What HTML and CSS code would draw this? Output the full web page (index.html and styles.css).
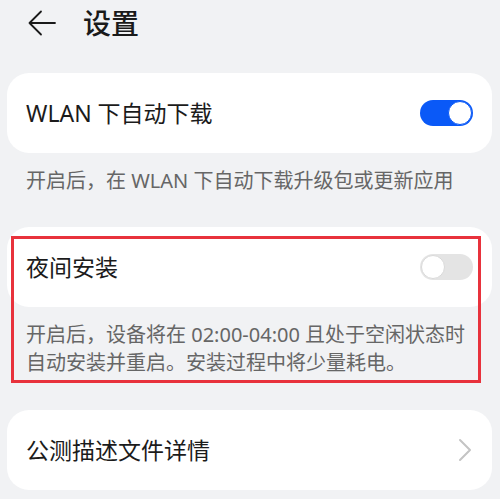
FILE: index.html
```html
<!DOCTYPE html>
<html lang="zh-CN">
<head>
<meta charset="utf-8">
<title>设置</title>
<link rel="stylesheet" href="styles.css">
</head>
<body>
<div class="page">
  <header class="header">
    <svg class="back" width="28" height="26" viewBox="0 0 28 26" aria-hidden="true">
      <path d="M13 1.5 L1.5 13 L13 24.5 M1.5 13 H27" fill="none" stroke="#1a1a1a" stroke-width="1.8" stroke-linecap="round" stroke-linejoin="round"/>
    </svg>
    <h1 class="title">设置</h1>
  </header>

  <section class="group group-first">
    <div class="card">
      <span class="card-label">WLAN 下自动下载</span>
      <span class="switch switch-on"><span class="knob"></span></span>
    </div>
    <p class="note">开启后，在 WLAN 下自动下载升级包或更新应用</p>
  </section>

  <section class="group group-marked">
    <div class="card">
      <span class="card-label">夜间安装</span>
      <span class="switch switch-off"><span class="knob"></span></span>
    </div>
    <p class="note">开启后，设备将在 02:00-04:00 且处于空闲状态时<br>自动安装并重启。安装过程中将少量耗电。</p>
    <div class="highlight"></div>
  </section>

  <section class="group group-last">
    <div class="card">
      <span class="card-label">公测描述文件详情</span>
      <svg class="chevron" width="14" height="24" viewBox="0 0 14 24" aria-hidden="true">
        <path d="M2 2 L12 12 L2 22" fill="none" stroke="#c4c4c4" stroke-width="2" stroke-linecap="round" stroke-linejoin="round"/>
      </svg>
    </div>
  </section>
</div>
</body>
</html>
```

FILE: styles.css
```css
html, body {
  margin: 0;
  padding: 0;
  background: #f1f2f4;
}

body {
  font-family: "Noto Sans", "Noto Sans CJK SC", sans-serif;
  color: #1b1b1b;
  width: 500px;
  height: 499px;
  overflow: hidden;
}

.page {
  display: flex;
  flex-direction: column;
  padding: 0 8px 0 7px;
}

.header {
  display: flex;
  align-items: center;
  height: 45px;
  padding-left: 21px;
}

.back {
  display: block;
  flex: none;
}

.title {
  margin: 0 0 0 27px;
  font-size: 28px;
  font-weight: 500;
  line-height: 36px;
  color: #1a1a1a;
}

.group {
  position: relative;
  display: flex;
  flex-direction: column;
}

.group-first {
  margin-top: 28px;
}

.group-marked {
  margin-top: 32px;
}

.group-last {
  margin-top: 33px;
}

.card {
  display: flex;
  align-items: center;
  justify-content: space-between;
  height: 80px;
  padding: 0 19px;
  background: #ffffff;
  border-radius: 22px;
}

.card-label {
  font-size: 23px;
  line-height: 30px;
  color: #1b1b1b;
}

.note {
  margin: 0;
  padding: 14px 19px 0;
  font-size: 20px;
  line-height: 28px;
  color: #666666;
}

.switch {
  position: relative;
  display: block;
  width: 53px;
  height: 26px;
  border-radius: 13px;
  flex: none;
}

.switch-on {
  background: #0a59f7;
}

.switch-off {
  background: #e4e4e4;
}

.knob {
  position: absolute;
  top: 1px;
  width: 24px;
  height: 24px;
  border-radius: 50%;
  background: #ffffff;
  box-sizing: border-box;
}

.switch-on .knob {
  right: 1px;
  border: 1.5px solid #0a59f7;
}

.switch-off .knob {
  left: 1px;
  border: 1px solid #d9d9d9;
}

.chevron {
  display: block;
  flex: none;
  margin-right: 1px;
}

.highlight {
  position: absolute;
  left: 4px;
  top: 9px;
  width: 470px;
  height: 147px;
  box-sizing: border-box;
  border: 3px solid #e8323c;
  pointer-events: none;
}
```
